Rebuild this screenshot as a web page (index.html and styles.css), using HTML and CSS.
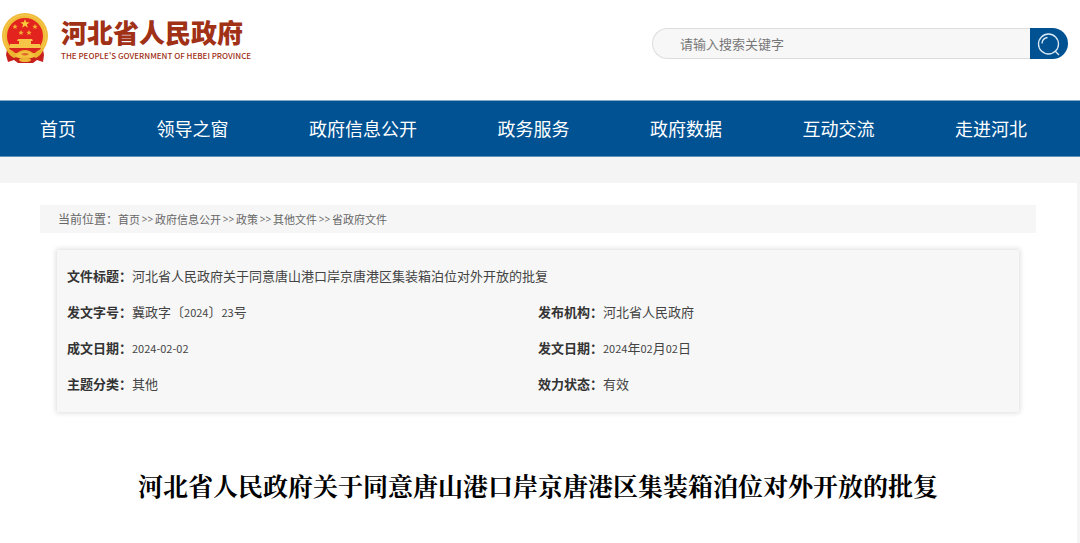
FILE: index.html
```html
<!DOCTYPE html>
<html lang="zh-CN">
<head>
    <meta charset="UTF-8">
    <meta name="viewport" content="width=device-width, initial-scale=1.0">
    <title>河北省人民政府关于同意唐山港口岸京唐港区集装箱泊位对外开放的批复</title>
    <link rel="stylesheet" href="styles.css">
</head>
<body>

<header class="header">
    <a class="logo" href="#">
        <!-- 国徽 -->
        <svg class="emblem" viewBox="0 0 48 52" aria-hidden="true">
            <path d="M7 32L5 43L7 50L13 48L17 51H32L36 48L42 50L43 43L41 32Z" fill="#c8201c"/>
            <circle cx="24" cy="24" r="23" fill="#efbb38"/>
            <circle cx="24" cy="24" r="21" fill="none" stroke="#f5ca50" stroke-width="1"/>
            <circle cx="24" cy="24" r="18" fill="#e3231d"/>
            <path d="M24 7l1.200 3.200 3.400.1-2.700 2.100 1 3.300-2.900-1.900-2.900 1.900 1-3.300-2.700-2.100 3.400-.1z" fill="#f8c93a"/>
            <g fill="#f3ae35">
                <path id="star" d="M14 12l.8 1.800 1.900.1-1.500 1.200.5 1.900-1.700-1.100-1.700 1.100.5-1.900-1.500-1.200 1.900-.1z"/>
                <use href="#star" x="20"/>
                <use href="#star" x="6" y="6"/>
                <use href="#star" x="14" y="6"/>
            </g>
            <path d="M17 27h14l1 2h-2v3h9v4H9v-4h9v-3h-2z" fill="#f6c447"/>
            <path d="M8 36h32l-3 5H11z" fill="#d92720"/>
            <path d="M5 36q7 2 10 6 4-4 9-4t9 4q3-4 10-6-2 7-8 10l-4-2q-7 4-14 0l-4 2Q7 43 5 36z" fill="#edb52f"/>
            <path d="M16 42q8-5 16 0l2 2q-5 3-10 1-5 2-10-1z" fill="#f4c441"/>
            <ellipse cx="24" cy="48" rx="6" ry="2" fill="#eeb637"/>
            <path d="M20 42q4-2 8 0-4 3-8 0z" fill="#e0672a"/>
        </svg>
        <span class="logo-text">
            <span class="logo-cn">河北省人民政府</span>
            <span class="logo-en">THE PEOPLE'S GOVERNMENT OF HEBEI PROVINCE</span>
        </span>
    </a>
    <form class="search" role="search">
        <input class="search-input" type="text" placeholder="请输入搜索关键字" aria-label="请输入搜索关键字">
        <button class="search-btn" type="submit" aria-label="搜索">
            <svg viewBox="0 0 24 24" width="24" height="24" fill="none" stroke="#dceaf5" stroke-width="1.300">
                <circle cx="11.500" cy="12" r="10"/>
                <path d="M18 19l4 4M5 11.500a6.500 6.500 0 0 1 5.500-6"/>
            </svg>
        </button>
    </form>
</header>

<nav class="nav">
    <a href="#">首页</a>
    <a href="#">领导之窗</a>
    <a href="#">政府信息公开</a>
    <a href="#">政务服务</a>
    <a href="#">政府数据</a>
    <a href="#">互动交流</a>
    <a href="#">走进河北</a>
</nav>

<main class="content">
    <div class="crumbs">
        <span class="crumbs-label">当前位置：</span>
        <a href="#">首页</a>
        <span class="sep">&gt;&gt;</span>
        <a href="#">政府信息公开</a>
        <span class="sep">&gt;&gt;</span>
        <a href="#">政策</a>
        <span class="sep">&gt;&gt;</span>
        <a href="#">其他文件</a>
        <span class="sep">&gt;&gt;</span>
        <a href="#">省政府文件</a>
    </div>

    <!-- 文件信息 -->
    <table class="info">
        <tr>
            <td colspan="2"><b>文件标题：</b>河北省人民政府关于同意唐山港口岸京唐港区集装箱泊位对外开放的批复</td>
        </tr>
        <tr>
            <td><b>发文字号：</b>冀政字〔<span class="num">2024</span>〕<span class="num">23</span>号</td>
            <td><b>发布机构：</b>河北省人民政府</td>
        </tr>
        <tr>
            <td><b>成文日期：</b><span class="num">2024-02-02</span></td>
            <td><b>发文日期：</b><span class="num">2024</span>年<span class="num">02</span>月<span class="num">02</span>日</td>
        </tr>
        <tr>
            <td><b>主题分类：</b>其他</td>
            <td><b>效力状态：</b>有效</td>
        </tr>
    </table>

    <h1 class="title">河北省人民政府关于同意唐山港口岸京唐港区集装箱泊位对外开放的批复</h1>
</main>

</body>
</html>
```
FILE: styles.css
```css
* {
    box-sizing: border-box;
}

body {
    margin: 0;
    min-height: 100vh;
    display: flex;
    flex-direction: column;
    background-color: #f4f4f4;
    color: #444;
    font-family: "Noto Sans CJK SC", sans-serif;
    font-size: 13px;
}

a {
    color: inherit;
    text-decoration: none;
}

/* 页头 */
.header {
    display: flex;
    justify-content: space-between;
    align-items: flex-start;
    padding: 12px 12px 36px 1px;
    background-color: #fff;
}

.logo {
    display: flex;
    gap: 12px;
    color: #a03016;
}

.emblem {
    width: 48px;
    height: 52px;
}

.logo-text {
    display: flex;
    flex-direction: column;
    padding-top: 4px;
}

.logo-cn {
    font-size: 26px;
    font-weight: 900;
    line-height: 32px;
}

.logo-en {
    font-family: "Noto Sans CJK SC", sans-serif;
    font-size: 8px;
    font-weight: 500;
    line-height: 16px;
    white-space: nowrap;
}

.search {
    display: flex;
    width: 416px;
    height: 31px;
    margin-top: 16px;
}

.search-input {
    flex: 1;
    min-width: 0;
    padding: 0 27px;
    border: 1px solid #ddd;
    border-right: 0;
    border-radius: 16px 0 0 16px;
    background-color: #f7f7f7;
    font-family: inherit;
    font-size: 13px;
}

.search-input::placeholder {
    color: #777;
}

.search-btn {
    display: flex;
    justify-content: center;
    align-items: center;
    width: 38px;
    padding: 0;
    border: 0;
    border-radius: 0 16px 16px 0;
    background-color: #005293;
}

/* 导航栏 */
.nav {
    display: flex;
    justify-content: space-between;
    padding: 0 53px 0 40px;
    border-top: 1px solid #80abc9;
    border-bottom: 1px solid #5f92bb;
    background-color: #005293;
    color: #fff;
    font-size: 18px;
    line-height: 55px;
}

/* 正文 */
.content {
    flex: 1;
    margin: 26px 3px 0 0;
    padding: 22px 41px 36px 40px;
    background-color: #fff;
}

.crumbs {
    display: flex;
    padding-left: 18px;
    background-color: #f6f6f6;
    color: #666;
    font-size: 11px;
    line-height: 28px;
}

.crumbs-label {
    font-size: 12px;
}

.sep {
    width: 15px;
    text-align: center;
    font-family: "Open Sans", sans-serif;
    font-size: 10px;
}

.info {
    width: calc(100% - 34px);
    margin: 17px 17px 0;
    padding: 8px 10px 10px;
    border-spacing: 0;
    table-layout: fixed;
    background-color: #f7f7f7;
    box-shadow: 0 0 5px 1px #ddd;
}

.info td {
    padding: 0;
    line-height: 36px;
}

.info b {
    color: #333;
}

.num {
    font-size: 11px;
}

.title {
    margin: 54px 0 0;
    color: #000;
    font-family: "Noto Serif CJK SC", "Noto Sans CJK SC", serif;
    font-size: 25px;
    line-height: 38px;
    text-align: center;
}
```
